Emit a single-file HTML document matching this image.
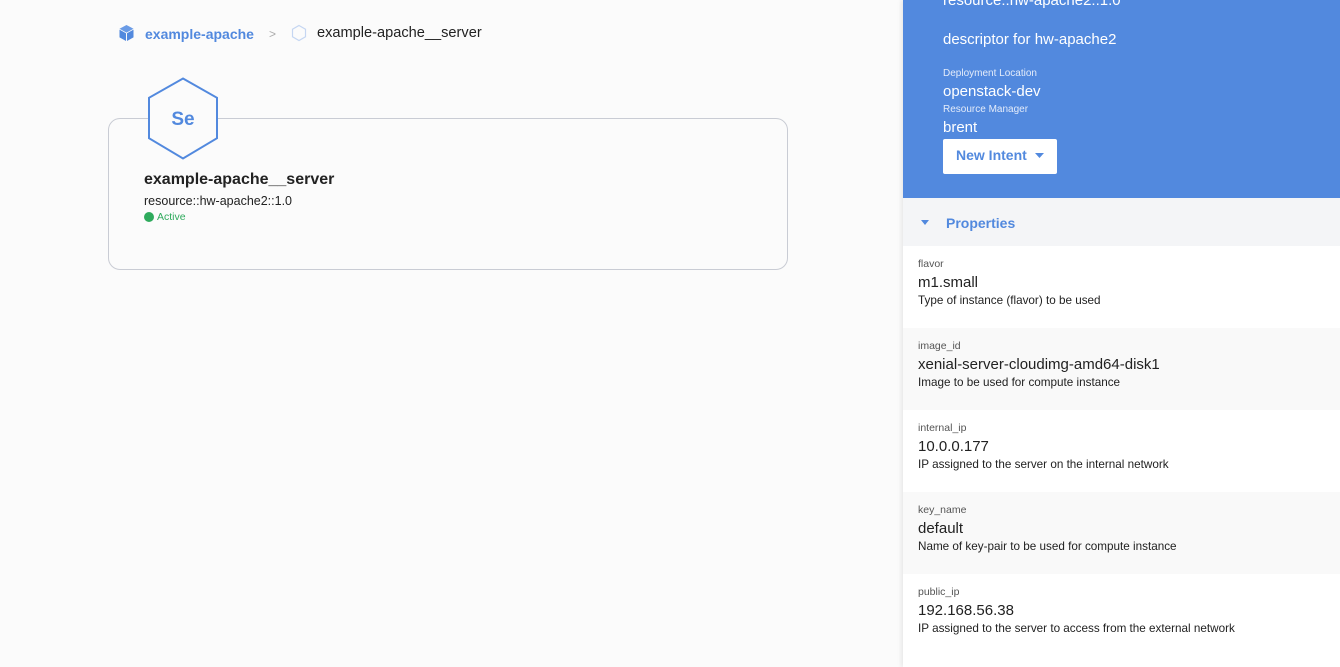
<!DOCTYPE html>
<html><head><meta charset="utf-8"><style>
*{margin:0;padding:0;box-sizing:border-box}
body{width:1340px;height:667px;overflow:hidden;background:#fbfbfb;font-family:"Liberation Sans","DejaVu Sans",sans-serif;color:#222;position:relative}
.abs{position:absolute;white-space:nowrap}
.card{position:absolute;left:108px;top:118px;width:680px;height:152px;border:1px solid #c9ccd4;border-radius:12px;background:#fbfbfb}
.panel{position:absolute;left:903px;top:0;width:437px;height:667px;background:#fff;box-shadow:-2px 0 4px rgba(0,0,0,.08)}
.blue{position:absolute;left:0;top:0;width:437px;height:198px;background:#5289de;color:#fff}
.ph{position:absolute;left:0;top:198px;width:437px;height:48px;background:#f4f5f7}
.row{position:absolute;left:0;width:437px;height:82px}
.row .k{position:absolute;left:15px;top:12px;font-size:10.5px;color:#555}
.row .v{position:absolute;left:15px;top:28px;font-size:15px;color:#222}
.row .d{position:absolute;left:15px;top:48px;font-size:11.7px;color:#222}
</style></head><body>
<svg class="abs" style="left:118px;top:24px" width="17" height="18" viewBox="0 0 17 18"><path d="M8.5 1L15.5 4.8 8.5 8.6 1.5 4.8Z" fill="#6a9be6"/><path d="M1.5 5.6L8 9.2V17L1.5 13.4Z" fill="#5289de"/><path d="M15.5 5.6L9 9.2V17L15.5 13.4Z" fill="#5289de"/></svg>
<div class="abs" style="left:145px;top:26px;font-size:14px;color:#5289de;font-weight:bold">example-apache</div>
<div class="abs" style="left:269px;top:27px;font-size:12px;color:#aaa">&gt;</div>
<svg class="abs" style="left:291px;top:24px" width="16" height="18" viewBox="0 0 16 18"><path d="M8 1.5L14.5 5.2V12.8L8 16.5 1.5 12.8V5.2Z" fill="none" stroke="#c5d6f2" stroke-width="1.2"/></svg>
<div class="abs" style="left:317px;top:25px;font-size:14.6px;color:#222">example-apache__server</div>
<div class="card"></div>
<svg class="abs" style="left:147px;top:77px" width="72" height="83" viewBox="0 0 72 83"><path d="M36 1.5L70 20.8V61.2L36 81.5 2 61.2V20.8Z" fill="#fbfbfb" stroke="#5289de" stroke-width="2"/><text x="36" y="48" text-anchor="middle" font-family="Liberation Sans,sans-serif" font-size="19" font-weight="bold" fill="#5289de">Se</text></svg>
<div class="abs" style="left:144px;top:171px;font-size:16px;font-weight:bold;color:#222">example-apache__server</div>
<div class="abs" style="left:144px;top:194px;font-size:12.5px;color:#222">resource::hw-apache2::1.0</div>
<div class="abs" style="left:144px;top:212px;width:10px;height:10px;border-radius:50%;background:#2eaa5c"></div>
<div class="abs" style="left:157px;top:211px;font-size:10.5px;color:#2eaa5c">Active</div>
<div class="panel">
<div class="blue">
<div class="abs" style="left:40px;top:-8px;font-size:15px">resource::hw-apache2::1.0</div>
<div class="abs" style="left:40px;top:31px;font-size:15px">descriptor for hw-apache2</div>
<div class="abs" style="left:40px;top:68px;font-size:10px;color:#e4ecfa">Deployment Location</div>
<div class="abs" style="left:40px;top:83px;font-size:15px">openstack-dev</div>
<div class="abs" style="left:40px;top:104px;font-size:10px;color:#e4ecfa">Resource Manager</div>
<div class="abs" style="left:40px;top:119px;font-size:15px">brent</div>
<div class="abs" style="left:40px;top:139px;width:114px;height:35px;background:#fff;border-radius:2px"></div>
<div class="abs" style="left:53px;top:147px;font-size:14px;color:#5289de;font-weight:bold">New Intent</div>
<svg class="abs" style="left:132px;top:153px" width="10" height="6"><path d="M0 0H9L4.5 5Z" fill="#5289de"/></svg>
</div>
<div class="ph">
<svg class="abs" style="left:18px;top:22px" width="10" height="6"><path d="M0 0H8L4 5Z" fill="#5289de"/></svg>
<div class="abs" style="left:43px;top:17px;font-size:14px;color:#5289de;font-weight:bold">Properties</div>
</div>
<div class="row" style="top:246px;background:#fff"><div class="k">flavor</div><div class="v">m1.small</div><div class="d">Type of instance (flavor) to be used</div></div>
<div class="row" style="top:328px;background:#f9f9f9"><div class="k">image_id</div><div class="v">xenial-server-cloudimg-amd64-disk1</div><div class="d">Image to be used for compute instance</div></div>
<div class="row" style="top:410px;background:#fff"><div class="k">internal_ip</div><div class="v">10.0.0.177</div><div class="d">IP assigned to the server on the internal network</div></div>
<div class="row" style="top:492px;background:#f9f9f9"><div class="k">key_name</div><div class="v">default</div><div class="d">Name of key-pair to be used for compute instance</div></div>
<div class="row" style="top:574px;background:#fff;height:93px"><div class="k">public_ip</div><div class="v">192.168.56.38</div><div class="d">IP assigned to the server to access from the external network</div></div>
</div>
</body></html>
